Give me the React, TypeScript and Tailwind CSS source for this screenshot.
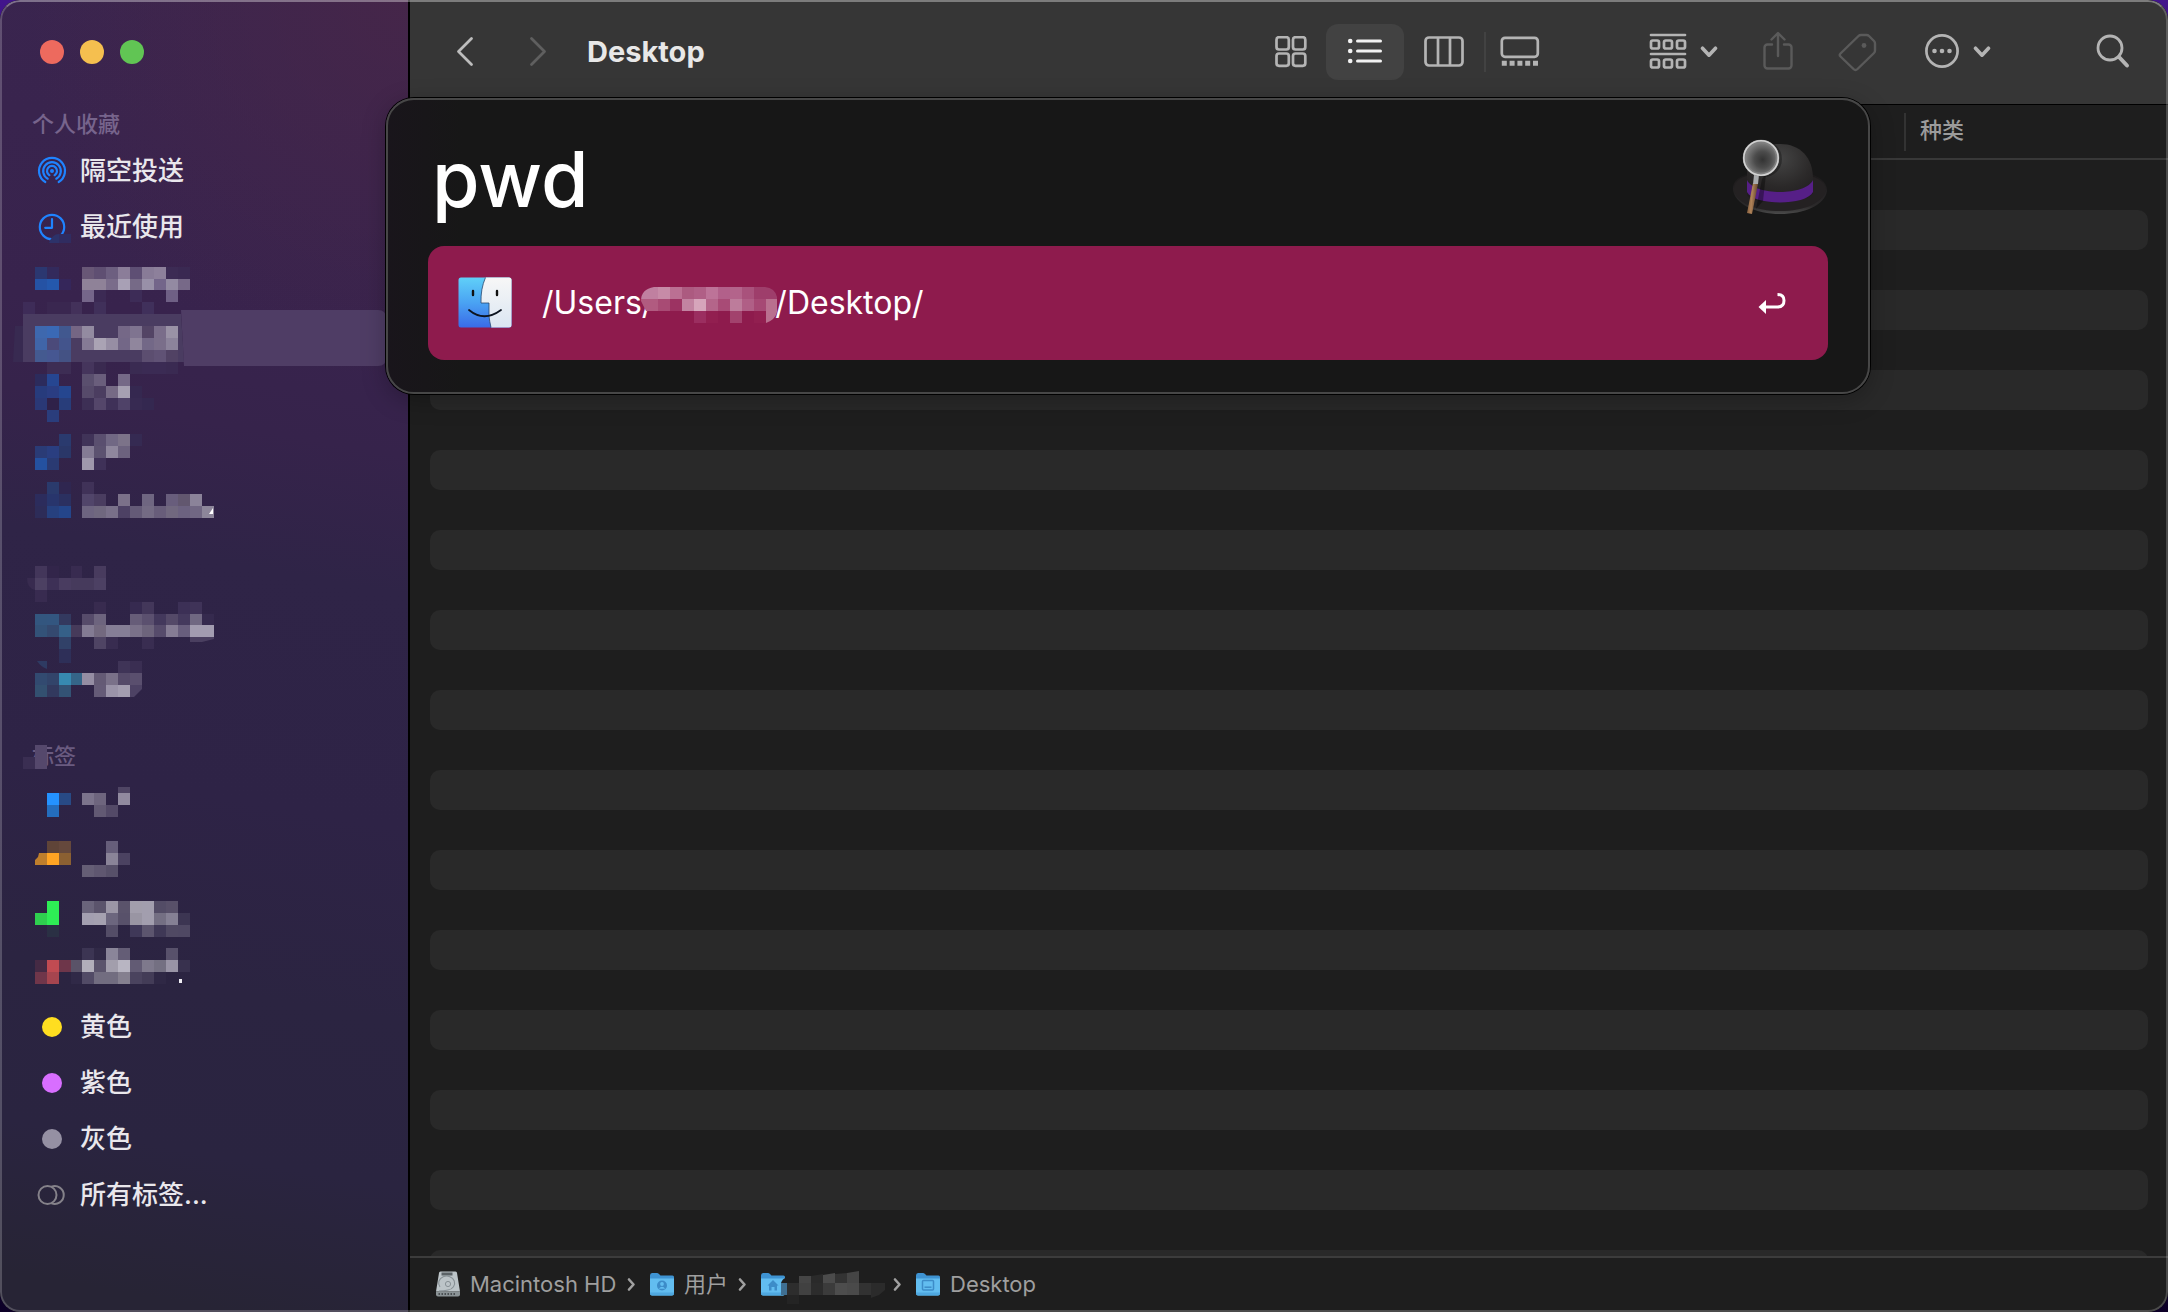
import type { ReactNode } from "react";

const SANS = "font-['Inter','Noto_Sans_CJK_SC',sans-serif]";

/* ---------- Pixelated blocks that hide private names ---------- */

const COLS = [23, 35, 47, 59, 71, 82, 94, 106, 118, 130, 142, 154, 166, 178, 190, 202, 214];

// [top, height, first column index, colours ("." leaves a cell empty)]
type Strip = [number, number, number, string];

function Cells({ strips }: { strips: Strip[] }) {
  return (
    <>
      {strips.flatMap(([y, h, start, colours]) =>
        colours.split(" ").map((c, i) =>
          c === "." ? null : (
            <rect key={`${y}-${i}`} x={COLS[start + i]} y={y} width={COLS[start + i + 1] - COLS[start + i]} height={h} fill={`#${c}`} shapeRendering="crispEdges" />
          ),
        ),
      )}
    </>
  );
}

function HiddenRow({ top, label, strips, children, header }: { top: number; label: string; strips: Strip[]; children?: ReactNode; header?: boolean }) {
  const h = header ? 40 : 56;
  const art = (
    <svg width="408" height={h} viewBox={`0 ${top} 408 ${h}`} className="block overflow-visible">
      {children}
      <Cells strips={strips} />
    </svg>
  );
  if (header) return <div className="h-10">{art}</div>;
  return (
    <button type="button" aria-label={label} className="block h-14 w-full">
      {art}
    </button>
  );
}

/* ---------- Sidebar ---------- */

function Row({ icon, children }: { icon: ReactNode; children: ReactNode }) {
  return (
    <button type="button" className="flex h-14 w-full items-center pl-9 text-left text-[26px] leading-9 font-medium text-[#e9e7ec]">
      <span className="flex w-11 items-center">{icon}</span>
      {children}
    </button>
  );
}

function Dot({ className }: { className: string }) {
  return <span className={`ml-1.5 block size-5 rounded-full ${className}`} />;
}

function AirDropIcon() {
  return (
    <svg width="32" height="32" viewBox="0 0 32 32" fill="none" stroke="#1f83ff" strokeWidth="2.2" strokeLinecap="round">
      <circle cx="16" cy="16" r="2" fill="#1f83ff" stroke="none" />
      <path d="M13.4 20.2a5 5 0 1 1 5.2 0" />
      <path d="M11.7 23.7a8.8 8.8 0 1 1 8.6 0" />
      <path d="M9.3 27a13 13 0 1 1 13.4 0" />
    </svg>
  );
}

function ClockIcon() {
  return (
    <svg width="32" height="32" viewBox="0 0 32 32" fill="none" stroke="#1f83ff" strokeWidth="2.2" strokeLinecap="round" strokeLinejoin="round" className="overflow-visible">
      <circle cx="16" cy="16" r="12.2" />
      <path d="M16 8v8.8H9.2" />
      <path d="M13 32q3-9 10-9h12v9z" fill="#2d3269" stroke="none" />
      <path d="M23 23h12v9H23z" fill="#302c60" stroke="none" />
    </svg>
  );
}

function Sidebar() {
  return (
    <aside className="flex w-[410px] shrink-0 flex-col border-r-2 border-black bg-[radial-gradient(circle_at_100%_0%,rgba(72,38,72,0.8)_0px,rgba(72,38,72,0)_380px),linear-gradient(190deg,#3a254f_0%,#38234d_26%,#36234b_33%,#2f2447_43%,#2e2346_60%,#2b2441_74%,#2a2440_86%,#272435_97%)]">
      <div className="flex h-[103px] gap-4 pt-10 pl-10">
        <button type="button" aria-label="关闭" className="size-6 rounded-full bg-[#ed6a5e]" />
        <button type="button" aria-label="最小化" className="size-6 rounded-full bg-[#f5bf4f]" />
        <button type="button" aria-label="缩放" className="size-6 rounded-full bg-[#61c554]" />
      </div>

      <nav aria-label="边栏">
        <h2 className="flex h-10 items-center pt-0.5 pl-8 text-[22px] font-medium text-[#77648c]">个人收藏</h2>
        <Row icon={<AirDropIcon />}>隔空投送</Row>
        <Row icon={<ClockIcon />}>最近使用</Row>
        <HiddenRow
          top={255}
          label="收藏 1"
          strips={[
            [267, 12, 1, "2b3770 332a5c . . 685776 5f4f72 6d5f80 8b7d99 5e4f74 887b97 8d809b 3c2b54 3a2952"],
            [279, 11, 1, "2552a4 2458ad 35265a . 8f8298 8f8298 7a6c8a a8a0b5 766a87 9890a8 73658a 938aa2 776988"],
            [290, 12, 5, "75668a 3c2a54 . . 3d2c57 . . 6f6085"],
          ]}
        />
        <HiddenRow
          top={311}
          label="收藏 2"
          strips={[
            [302, 12, 0, "3e2c58 . 3a2750 3a2750 43315a . 40305a . . . 40305b"],
            [326, 12, 1, "3e68ae 3a69b5 41588f 756684 938ba1 . . 756887 7f7490 534465 7a6d8a 9a92a6"],
            [338, 12, 1, "4065a8 4b4a7a 43548c . 857a95 aaa3b4 978ea4 736787 90869d 736887 7a6e8a 8c839b"],
            [350, 12, 1, "445a90 465792 445284 . . . . . . 5c4e70 605275 514264"],
            [362, 12, 2, "3d2d54 3d2d54 . 45355c 3a2a50 . . 3a2b52 3b2b54 3b2b54 3a2a52"],
          ]}
        >
          <path d="M181 310H378q8 0 8 8V358q0 8 -8 8H184z" fill="#4f3d65" />
          <path d="M23 314H181L184 362H23z" fill="#4a3c61" />
          <path d="M15 326h8v36H13z" fill="#382a51" />
        </HiddenRow>
        <HiddenRow
          top={367}
          label="收藏 3"
          strips={[
            [374, 12, 1, "2c2b5c 264691 . . 5a4f6e 6a5e7c . 756987"],
            [386, 12, 1, "273b7c 2a3d82 25468f . 564a6a 4b3d60 766a85 a6a0b2 352850"],
            [398, 12, 1, "2a3876 2f2149 283d7a . 3d2f55 54466a 3f3158 4f4268 372a52 342850"],
            [410, 12, 2, "2a3d7c"],
          ]}
        />
        <HiddenRow
          top={423}
          label="收藏 4"
          strips={[
            [434, 12, 3, "2a3a6e . 403358 5a4f6f 716884 7c7389 352a52"],
            [446, 12, 1, "2a3b76 2a3e80 2a3768 . 847b94 5c5270 8f879d 6c627e"],
            [458, 12, 1, "2451a0 2a3a72 . . 9f98ac 3f3158"],
          ]}
        />
        <HiddenRow
          top={479}
          label="收藏 5"
          strips={[
            [482, 12, 2, "2a3a6c 2f2650 . 403258"],
            [494, 12, 1, "2c2c5c 28356c 2b3060 . 51456a 4a3d60 . 7b7189 . 6f6681 . 685d7c 62576f 8b8399"],
            [506, 12, 1, "2d2c58 26407e 24458a . 6d6480 70687f 797089 4d4164 645a77 746b84 685d7a 71687f 6c6280 716783"],
          ]}
        >
          <path d="M202 506h12v12h-12z" fill="#8d869a" />
          <path d="M213 508v6h-4z" fill="#ffffff" />
        </HiddenRow>

        <div className="mt-6">
          <HiddenRow
            header
            top={559}
            label=""
            strips={[
              [566, 12, 1, "43365a 32254a . 382b50 . 483b5e"],
              [578, 12, 1, "4c4062 3d3056 493c60 463a5c 463a5c 4c4063"],
              [590, 12, 1, "382b50"],
            ]}
          >
            <path d="M27 578h8v12q-8-2-8-12z" fill="#382b4f" />
          </HiddenRow>
          <HiddenRow
            top={599}
            label="位置 1"
            strips={[
              [602, 12, 6, "382b4f . . 362a50 43375a . . 3c3056 3f3358"],
              [614, 11, 1, "33567f 335680 33395f . 564b6a 6d647e . . 665c78 5b506f 43385c 544968 44395d 706882 352a4e"],
              [625, 12, 1, "335278 34496f 356088 463a5a 837b93 73697f 857e96 857e96 7a7189 6d647c 564b6b 857c94 685e7d a29cb0 a29cb0"],
              [637, 12, 3, "314168 . . 4f4464 382c50 . . 392d51"],
            ]}
          >
            <path d="M190 637h24v2l-12 3h-12z" fill="#4a3f60" />
          </HiddenRow>
          <HiddenRow
            top={655}
            label="位置 2"
            strips={[
              [649, 14, 3, "2e2f58"],
              [661, 12, 8, "3f3457 3a2e52"],
              [673, 12, 1, "324a70 32446a 3789b0 356588 958da3 645a75 7a7189 554a69 5a4f6e"],
              [685, 12, 1, "335070 32395e 335274 . . 655b77 9a93a8 a39db0"],
            ]}
          >
            <path d="M37 661h10v8q-6-2-10-8z" fill="#2e3a62" />
            <path d="M130 685h12v4l-8 8h-4z" fill="#4d4264" />
          </HiddenRow>
        </div>

        <div className="mt-6">
          <h2 className="relative flex h-10 items-center pt-0.5 pl-8 text-[22px] font-medium text-[#6a5b80]">
            标签
            <span aria-hidden="true" className="absolute top-2.5 left-[35px] h-6 w-3 bg-[#55486c]" />
            <span aria-hidden="true" className="absolute top-[22px] left-[23px] size-3 bg-[#3a2e52]" />
          </h2>
          <HiddenRow
            top={775}
            label="标签 1"
            strips={[
              [787, 6, 8, "4f4564"],
              [793, 12, 2, "2492ff 284a85 . 7c748c 6e657e . 918a9f"],
              [805, 12, 2, "246dbd . . . 625973 534967"],
            ]}
          />
          <HiddenRow
            top={831}
            label="标签 2"
            strips={[
              [841, 12, 2, "5f4438 65483c . . . 665e7a"],
              [853, 12, 2, "ffa423 8b6032 . . . 8a8498 4b4261"],
              [865, 12, 5, "655e75 5f5770 575069"],
            ]}
          >
            <path d="M47 853H39l-1 4-3 3v5h12z" fill="#be7e2c" />
          </HiddenRow>
          <HiddenRow
            top={887}
            label="标签 3"
            strips={[
              [901, 12, 2, "2eed55 . . 6a647b 5b546c 9b96a6 5a536b a29eac a29eae 534c66 585069"],
              [913, 12, 1, "2fcf4f 2eed55 . . a39fb0 a5a1b0 6c667e 58516a 9995a3 a29eae 746f83 858094 3c3552"],
              [925, 12, 2, "2a3044 . . . . 544d67 . 3f3858 5c556e 3f3856 504963 4f4863"],
            ]}
          />
          <HiddenRow
            top={943}
            label="标签 4"
            strips={[
              [948, 12, 5, "3c3553 302946 8a8599 645d76 . . . 58516b"],
              [960, 12, 1, "452a44 c14b52 6e364a 5a5368 b2afba 5b546c a29eac b8b5c2 625b74 7e798c 747082 9994a6 38314e"],
              [972, 12, 1, "70364a a6454f . 302947 524b66 726d80 726d80 85808f 4a435e 433c57 2f2845"],
            ]}
          >
            <rect x="179" y="979" width="3" height="4" fill="#f0eef4" />
          </HiddenRow>
          <Row icon={<Dot className="bg-[#ffde20]" />}>黄色</Row>
          <Row icon={<Dot className="bg-[#d86eff]" />}>紫色</Row>
          <Row icon={<Dot className="bg-[#9590a3]" />}>灰色</Row>
          <Row
            icon={
              <svg width="30" height="24" viewBox="0 0 30 24" fill="none" stroke="#85828a" strokeWidth="2">
                <circle cx="11.500" cy="12" r="9" />
                <path d="M15.500 3.600a9 9 0 1 1 0 16.800" />
              </svg>
            }
          >
            所有标签...
          </Row>
        </div>
      </nav>
    </aside>
  );
}

/* ---------- Toolbar ---------- */

function Chevron({ className }: { className: string }) {
  return (
    <svg width="18" height="14" viewBox="0 0 18 14" fill="none" stroke="currentColor" strokeWidth="3.6" strokeLinecap="round" strokeLinejoin="round" className={className}>
      <path d="M2.500 3.200 9 10.200l6.500-7" />
    </svg>
  );
}

function Toolbar() {
  return (
    <header className="flex h-[105px] shrink-0 items-start border-b border-black bg-[#363636] pt-6 text-[#b4b4b4]">
      <div className="flex h-14 flex-1 items-center pl-[42px]">
        <button type="button" aria-label="后退" className="text-[#bdbdbd]">
          <svg width="26" height="36" viewBox="0 0 26 36" fill="none" stroke="currentColor" strokeWidth="2.800" strokeLinecap="round" strokeLinejoin="round">
            <path d="M19.500 4.500 6.500 17.500l13 13" />
          </svg>
        </button>
        <button type="button" aria-label="前进" className="ml-12 text-[#5f5f5f]">
          <svg width="26" height="36" viewBox="0 0 26 36" fill="none" stroke="currentColor" strokeWidth="2.800" strokeLinecap="round" strokeLinejoin="round">
            <path d="M5.500 4.500l13 13-13 13" />
          </svg>
        </button>
        <h1 className="ml-[35px] text-[29px] leading-10 font-bold text-[#e8e8e8]">Desktop</h1>
      </div>

      <div className="flex h-14 items-center">
        <button type="button" aria-label="图标" className="flex w-[70px] justify-center">
          <svg width="32" height="32" viewBox="0 0 32 32" fill="none" stroke="currentColor" strokeWidth="2.700">
            <rect x="1.500" y="1.200" width="12.300" height="12.300" rx="2.500" />
            <rect x="18" y="1.200" width="12.300" height="12.300" rx="2.500" />
            <rect x="1.500" y="17.500" width="12.300" height="12.300" rx="2.500" />
            <rect x="18" y="17.500" width="12.300" height="12.300" rx="2.500" />
          </svg>
        </button>
        <button type="button" aria-label="列表" className="flex h-14 w-[78px] items-center justify-center rounded-xl bg-[#424242] text-[#f2f2f2]">
          <svg width="36" height="28" viewBox="0 0 36 28" fill="none" stroke="currentColor" strokeWidth="3" strokeLinecap="round">
            <path d="M10.500 3H33.500M10.500 13H33.500M10.500 23H33.500" />
            <g fill="currentColor" stroke="none">
              <circle cx="3.200" cy="3" r="2.300" />
              <circle cx="3.200" cy="13" r="2.300" />
              <circle cx="3.200" cy="23" r="2.300" />
            </g>
          </svg>
        </button>
        <button type="button" aria-label="分栏" className="flex w-20 justify-center">
          <svg width="40" height="32" viewBox="0 0 40 32" fill="none" stroke="currentColor" strokeWidth="2.700">
            <rect x="1.500" y="1.500" width="37" height="28" rx="3.500" />
            <path d="M14 1.500v28M26 1.500v28" />
          </svg>
        </button>
        <span className="h-10 w-0.5 bg-[#424242]" />
        <button type="button" aria-label="画廊" className="flex w-[68px] justify-center">
          <svg width="40" height="32" viewBox="0 0 40 32" fill="none" stroke="currentColor" strokeWidth="2.700">
            <rect x="1.800" y="1.800" width="36" height="19" rx="3.200" />
            <path d="M1.800 27.200H38" strokeWidth="5" strokeDasharray="5 2.800" />
          </svg>
        </button>
      </div>

      <button type="button" aria-label="群组" className="ml-[94px] flex h-14 items-center">
        <svg width="40" height="40" viewBox="0 0 40 40" fill="none" stroke="currentColor" strokeWidth="2.700" strokeLinecap="round">
          <path d="M3 3H37M3 22H37" />
          {[3, 16, 29].map((x) => (
            <g key={x}>
              <rect x={x} y="8.500" width="8" height="8" rx="1.800" />
              <rect x={x} y="27.500" width="8" height="8" rx="1.800" />
            </g>
          ))}
        </svg>
        <Chevron className="ml-3" />
      </button>
      <button type="button" aria-label="共享" className="ml-[42px] flex h-14 items-center text-[#5a5a5a]">
        <svg width="36" height="44" viewBox="0 0 36 44" fill="none" stroke="currentColor" strokeWidth="2.400" strokeLinecap="round" strokeLinejoin="round">
          <path d="M12 14.500H7.500a3 3 0 0 0-3 3V35.500a3 3 0 0 0 3 3h21a3 3 0 0 0 3-3V17.500a3 3 0 0 0-3-3H24M18 26V3.500M11.500 9.500 18 3 24.500 9.500" />
        </svg>
      </button>
      <button type="button" aria-label="标签" className="ml-[42px] flex h-14 items-center text-[#5a5a5a]">
        <svg width="40" height="44" viewBox="0 0 40 44" fill="none" stroke="currentColor" strokeWidth="2.400" strokeLinejoin="round">
          <path d="M20.500 6Q21.500 5 23 5H28.500Q30 5 31 6L36 11Q37 12 37 13.500V20.500Q37 22 36 23L19.500 39Q17.500 41 15.500 39L2.500 26.500Q1 25 2.500 23.500Z" />
          <circle cx="26" cy="15.500" r="2.400" fill="currentColor" stroke="none" />
        </svg>
      </button>
      <button type="button" aria-label="更多" className="ml-11 flex h-14 items-center">
        <svg width="40" height="40" viewBox="0 0 40 40" fill="none" stroke="currentColor" strokeWidth="2.700">
          <circle cx="20" cy="19" r="15.600" />
          <g fill="currentColor" stroke="none">
            <circle cx="12.500" cy="19" r="2.300" />
            <circle cx="20" cy="19" r="2.300" />
            <circle cx="27.500" cy="19" r="2.300" />
          </g>
        </svg>
        <Chevron className="ml-[11px]" />
      </button>
      <button type="button" aria-label="搜索" className="mr-[37px] ml-[104px] flex h-14 items-center">
        <svg width="36" height="36" viewBox="0 0 36 36" fill="none" stroke="currentColor" strokeLinecap="round">
          <circle cx="15" cy="14" r="12" strokeWidth="2.800" />
          <path d="M24 23 32 31.500" strokeWidth="4" />
        </svg>
      </button>
    </header>
  );
}

/* ---------- File list ---------- */

function FileList() {
  return (
    <div className="min-h-0 flex-1 overflow-hidden">
      <table className="w-full table-fixed border-separate border-spacing-0">
        <thead>
          <tr>
            <th aria-label="名称" className="h-[55px] border-b-2 border-[#383838] p-0" />
            <th scope="col" className="h-[55px] w-[264px] border-b-2 border-[#383838] p-0 text-left">
              <div className="flex h-[38px] items-center border-l-2 border-[#333333] pb-0.5 pl-3.5 text-[22px] font-medium text-[#9b9b9b]">种类</div>
            </th>
          </tr>
        </thead>
        <tbody>
          <tr>
            <td colSpan={2} className="h-2.5 p-0" />
          </tr>
          {Array.from({ length: 28 }, (_, i) => (
            <tr key={i}>
              <td colSpan={2} className="h-10 px-5 py-0">
                <div className={i % 2 ? "h-10 rounded-[10px] bg-[#292929]" : "h-10"} />
              </td>
            </tr>
          ))}
        </tbody>
      </table>
    </div>
  );
}

/* ---------- Path bar ---------- */

function Folder({ children }: { children: ReactNode }) {
  return (
    <svg width="26" height="26" viewBox="0 0 26 26">
      <path d="M1 4.500Q1 2 3 2H8Q9 2 10 3L11.500 4.500H23.500Q25 4.500 25 6V12H1z" fill="#3e93d2" />
      <path d="M1 7.500H25V22.500Q25 24.500 23 24.500H3Q1 24.500 1 22.500z" fill="#62bdf0" />
      <path d="M1 21.500H25V22.500Q25 24.500 23 24.500H3Q1 24.500 1 22.500z" fill="#4fa8e0" />
      {children}
    </svg>
  );
}

function DriveIcon() {
  return (
    <svg width="26" height="28" viewBox="0 0 26 28">
      <path d="M4 3Q4 1.500 5.500 1.500H20.500Q22 1.500 22 3L25 21.500H1z" fill="#bcc4c8" />
      <path d="M1 21.500H25V24.500Q25 26.500 23 26.500H3Q1 26.500 1 24.500z" fill="#8b9396" />
      <path d="M3.500 24H21" stroke="#4b5053" strokeWidth="2" strokeDasharray="1.500 1.500" />
      <rect x="6.500" y="2.500" width="11" height="3" fill="#5b6266" />
      <path d="M5 17a8 7 0 1 1 8 3q-4 1-9 1" fill="none" stroke="#879095" strokeWidth="1.100" />
      <circle cx="13" cy="14" r="2.600" fill="none" stroke="#879095" />
    </svg>
  );
}

function Separator() {
  return (
    <svg width="10" height="16" viewBox="0 0 10 16" fill="none" stroke="#a0a0a0" strokeWidth="2.600" strokeLinecap="round" strokeLinejoin="round">
      <path d="M3 3.500l4.500 5L3 13.500" />
    </svg>
  );
}

function PathBar() {
  return (
    <footer className="flex h-14 shrink-0 items-center border-t-2 border-[#3c3c3c] bg-[#1e1e1e] pb-0.5 pl-[25px] text-[22px] leading-8 text-[#9f9f9f]">
      <DriveIcon />
      <span className="ml-[9px] w-[156px]">Macintosh HD</span>
      <Separator />
      <span className="ml-[13px] flex">
        <Folder>
          <circle cx="13" cy="14.500" r="5" fill="#3d8cc8" />
          <circle cx="13" cy="13" r="1.900" fill="#62bdf0" />
          <path d="M9.800 17.800q3.200-4 6.400 0" fill="#62bdf0" />
        </Folder>
      </span>
      <span className="ml-[9px] w-[53px]">用户</span>
      <Separator />
      <span className="ml-[13px] flex" role="img" aria-label="个人文件夹">
        <Folder>
          <path d="M7.500 14.500 13 9l5.500 5.500H17V19.500H14.500V16H11.500V19.500H9V14.500z" fill="#3d8cc8" />
        </Folder>
        <svg width="106" height="26" viewBox="0 0 106 26" className="overflow-visible">
          <path d="M1 6V12H-5Q-4 8 1 6z" fill="#1e1e1e" />
          <g shapeRendering="crispEdges">
            <rect x="-5" y="12" width="6" height="12" fill="#3f6f92" />
            <rect x="1" y="12" width="12" height="12" fill="#2d2d2d" />
            <rect x="1" y="24" width="12" height="9" fill="#242424" />
            <rect x="13" y="5" width="12" height="7" fill="#454545" />
            <rect x="13" y="12" width="12" height="12" fill="#414141" />
            <rect x="25" y="12" width="12" height="12" fill="#2c2c2c" />
            <rect x="37" y="12" width="12" height="12" fill="#3b3b3b" />
            <rect x="49" y="12" width="12" height="12" fill="#4d4d4d" />
            <rect x="61" y="12" width="12" height="12" fill="#4a4a4a" />
            <rect x="73" y="12" width="12" height="12" fill="#323232" />
          </g>
          <path d="M25 5l12-2v9H25z" fill="#2a2a2a" />
          <path d="M37 4l12-2v10H37z" fill="#4b4b4b" />
          <path d="M49 3l12-1v10H49z" fill="#333333" />
          <path d="M61 2l12-2v12H61z" fill="#454545" />
          <path d="M85 12h14v7l-6 5-8 3z" fill="#2b2b2b" />
        </svg>
      </span>
      <Separator />
      <span className="ml-[13px] flex">
        <Folder>
          <rect x="7.500" y="9.500" width="11" height="9.500" rx="1" fill="none" stroke="#3d8cc8" strokeWidth="1.500" />
          <path d="M9.500 16.200h7" stroke="#3d8cc8" strokeWidth="1.500" />
        </Folder>
      </span>
      <span className="ml-[9px]">Desktop</span>
    </footer>
  );
}

/* ---------- Launcher panel ---------- */

function HatIcon() {
  return (
    <svg width="96" height="78" viewBox="0 0 96 78">
      <defs>
        <radialGradient id="dome" cx="0.5" cy="0.25" r="0.8">
          <stop offset="0" stopColor="#444444" />
          <stop offset="0.6" stopColor="#2b2929" />
          <stop offset="1" stopColor="#1f1c1e" />
        </radialGradient>
        <radialGradient id="lens" cx="0.55" cy="0.55">
          <stop offset="0" stopColor="#333333" />
          <stop offset="0.5" stopColor="#4c4c4c" />
          <stop offset="1" stopColor="#7c7c7c" />
        </radialGradient>
        <linearGradient id="brim" x1="0" y1="0" x2="0" y2="1">
          <stop offset="0" stopColor="#1b191a" />
          <stop offset="0.8" stopColor="#2b292a" />
          <stop offset="1" stopColor="#4a4a4a" />
        </linearGradient>
        <linearGradient id="wood" x1="0" y1="0" x2="1" y2="0.2">
          <stop offset="0" stopColor="#6d4a30" />
          <stop offset="0.5" stopColor="#b08358" />
          <stop offset="1" stopColor="#5f4029" />
        </linearGradient>
      </defs>
      <path d="M1 50C1 39 12 36 20 34H76C86 37 95 42 95 52C93 66 72 75 48 75C24 75 2 65 1 50z" fill="url(#brim)" />
      <path d="M2 51C2 40 12 37 20 36H76C86 39 94 43 94 51C91 64 72 72 48 72C24 72 4 64 2 51z" fill="#242122" />
      <path d="M15 56V34C15 14 28 5 48 5S81 18 81 40V54C76 66 20 66 15 56z" fill="url(#dome)" />
      <path d="M15 41C22 57 74 57 81 41V53C74 67 22 67 15 53z" fill="#561f87" />
      <path d="M34 35 31 62 24 70 30 40z" fill="#000000" opacity="0.35" />
      <path d="M21 44l5 1-6 30-5-1z" fill="url(#wood)" />
      <path d="M22 36h5l-1 9h-5z" fill="#a9abad" />
      <circle cx="32" cy="20" r="18" fill="#000000" opacity="0.3" />
      <circle cx="29" cy="19" r="16.500" fill="url(#lens)" stroke="#808080" strokeWidth="3.500" />
      <circle cx="29" cy="19" r="17.200" fill="none" stroke="#d2d2d2" strokeWidth="1.600" />
    </svg>
  );
}

function FinderIcon() {
  return (
    <svg width="54" height="52" viewBox="0 0 54 52">
      <defs>
        <linearGradient id="faceBlue" x1="0" y1="0" x2="0" y2="1">
          <stop offset="0" stopColor="#60d0f8" />
          <stop offset="0.5" stopColor="#4aa3f3" />
          <stop offset="1" stopColor="#3a6be8" />
        </linearGradient>
        <linearGradient id="faceWhite" x1="0" y1="0" x2="0" y2="1">
          <stop offset="0" stopColor="#f7f7f7" />
          <stop offset="1" stopColor="#dbe6f2" />
        </linearGradient>
      </defs>
      <rect x="0.500" y="0.500" width="53" height="50" rx="2.500" fill="url(#faceBlue)" />
      <path d="M27.500 0.500H51Q53.500 0.500 53.500 3V48Q53.500 50.500 51 50.500H33Q31.500 44 31 39V26H23Q22.500 12 27.500 0.500z" fill="url(#faceWhite)" />
      <path d="M27.500 0.500Q22.500 12 23 26H31V39Q31.500 44 33 50.500" fill="none" stroke="#27486f" strokeWidth="0.800" />
      <path d="M15 14v4M39 14v4" stroke="#111111" strokeWidth="2.400" strokeLinecap="round" />
      <path d="M11 33Q26 45.500 43 33" fill="none" stroke="#0d1420" strokeWidth="1.800" strokeLinecap="round" />
    </svg>
  );
}

function Launcher() {
  return (
    <section
      aria-label="启动器"
      className="absolute top-[98px] right-[298px] left-[386px] rounded-[28px] border-2 border-[#474747] bg-[linear-gradient(90deg,#19151b_0%,#171717_5%)] px-10 pt-[35px] pb-8 shadow-[0_0_0_1px_#000000,0_6px_24px_rgba(0,0,0,0.25)]"
    >
      <div className="flex h-[111px] items-start">
        <input
          aria-label="搜索"
          defaultValue="pwd"
          className="h-[88px] min-w-0 flex-1 bg-transparent pl-1 text-[77px] leading-[88px] font-medium text-white outline-none"
        />
        <span className="mt-1">
          <HatIcon />
        </span>
      </div>
      <button type="button" className="flex h-[114px] w-full items-center rounded-2xl bg-[#8e1b4d] pr-[42px] pl-[30px] text-white">
        <FinderIcon />
        <span className="ml-[30px] flex items-center text-[32px] leading-[48px]">
          <span>/Users/</span>
          <svg width="122" height="40" viewBox="652 0 122 40" className="overflow-visible">
            <defs>
              <clipPath id="blob">
                <path d="M653 4H764Q774 5 776 14V29Q774 37 765 40H692V28H645L640 18Q640 6 653 4z" />
              </clipPath>
            </defs>
            <g clipPath="url(#blob)" shapeRendering="crispEdges">
              {[
                ["c080a0", "c78ba7", "bb7093", "ac5a80", "b05f86", "bd7398", "b2608a", "b3648b", "a9527c", "9e3e6b", "9e3e6b"],
                ["b15b80", "a84b74", "9c3362", "c283a1", "d6a5bb", "b4658a", "a84b76", "bd7c9b", "b05f86", "a64974", "b9708f"],
                ["8e1b4d", "8e1b4d", "8e1b4d", "8e1b4d", "9b2e60", "921f50", "8e1b4d", "a2426d", "8e1b4d", "921f50", "b9708f"],
              ].map((line, r) => line.map((c, i) => <rect key={`${r}-${i}`} x={i ? 645 + i * 12 : 640} y={4 + r * 12} width={i ? 12 : 17} height="12" fill={`#${c}`} />))}
            </g>
          </svg>
          <span>/Desktop/</span>
        </span>
        <svg width="28" height="24" viewBox="0 0 28 24" className="ml-auto">
          <path d="M19.500 3.500Q26 3.500 26 9.500Q26 16 19.500 16H8" fill="none" stroke="#ffffff" strokeWidth="3" />
          <path d="M0.500 16 8 9V23z" fill="#ffffff" />
        </svg>
      </button>
    </section>
  );
}

export default function App() {
  return (
    <div className={`h-screen bg-[linear-gradient(180deg,#42158c_0%,#0d0028_100%)] ${SANS}`}>
      <div className="relative flex h-full overflow-hidden rounded-[20px] bg-[#1e1e1e]">
        <Sidebar />
        <main className="flex min-w-0 flex-1 flex-col">
          <Toolbar />
          <FileList />
          <PathBar />
        </main>
        <div aria-hidden="true" className="pointer-events-none absolute inset-0 rounded-[20px] border-2 border-white/20 border-t-white/35" />
        <Launcher />
      </div>
    </div>
  );
}
